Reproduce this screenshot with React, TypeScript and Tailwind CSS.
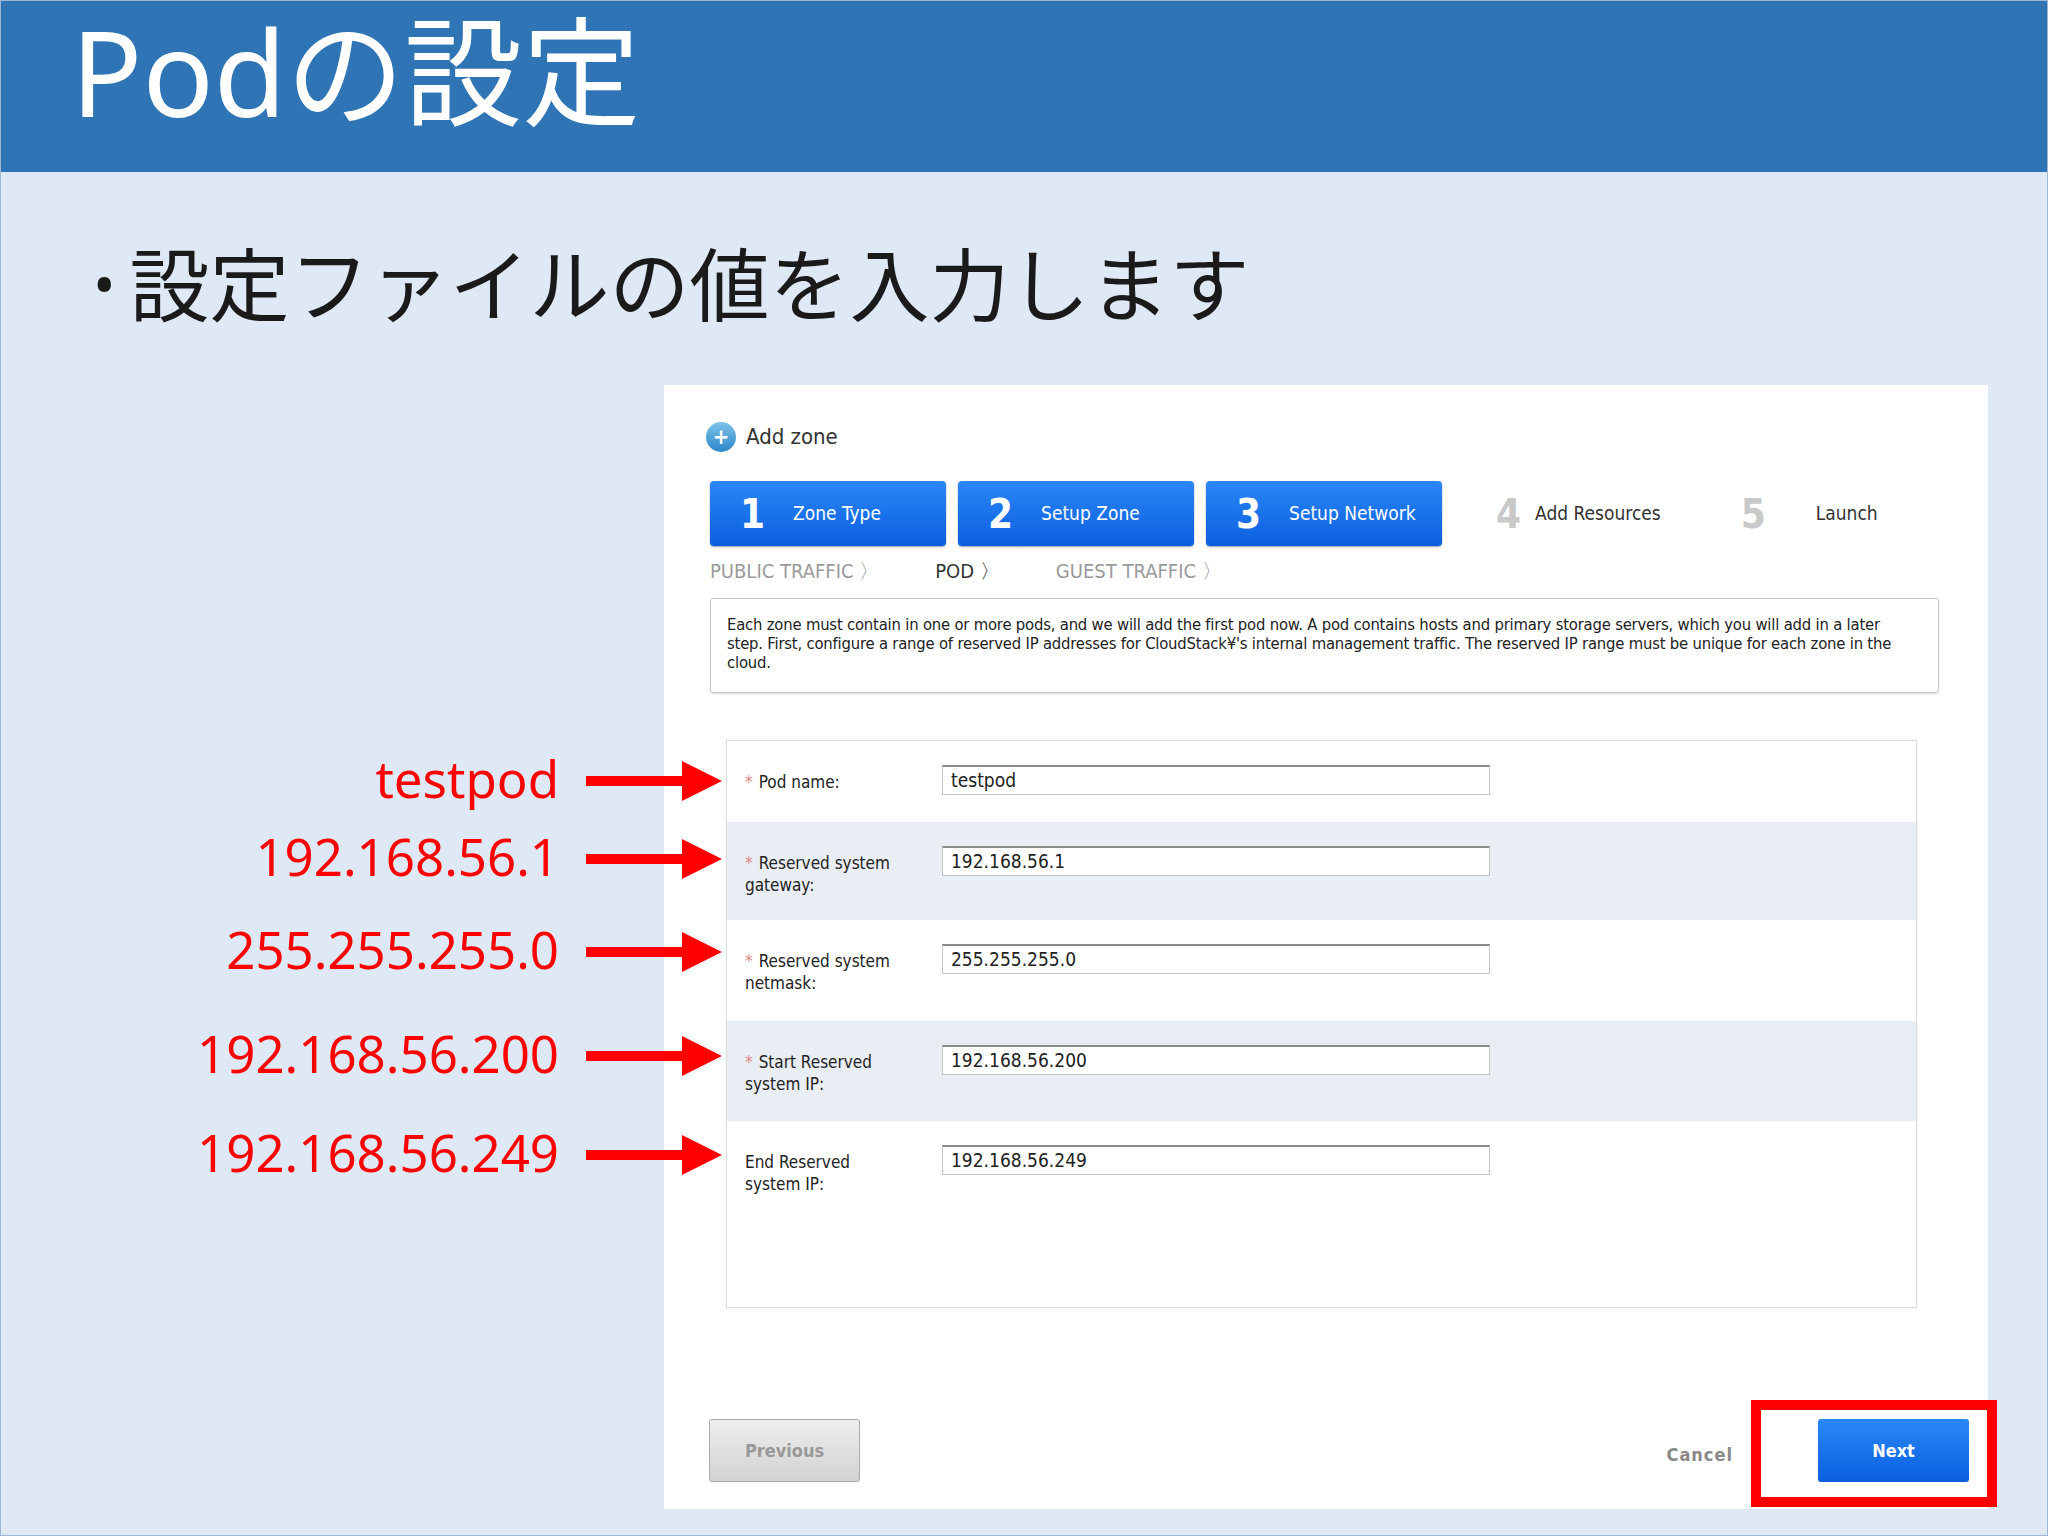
import React from "react";

const jp = { fontFamily: '"Noto Sans", "Noto Sans CJK JP", sans-serif' };
const ui = { fontFamily: '"DejaVu Sans Condensed", "Liberation Sans", sans-serif' };

function Arrow({ top }: { top: number }) {
  return (
    <svg className="absolute" style={{ left: 585, top: top - 22 }} width="140" height="44" viewBox="0 0 140 44">
      <rect x="0" y="17" width="100" height="10" fill="#ff0000" />
      <polygon points="96,2 136,22 96,42" fill="#ff0000" />
    </svg>
  );
}

const annotations = [
  { t: "testpod", y: 780 },
  { t: "192.168.56.1", y: 858 },
  { t: "255.255.255.0", y: 951 },
  { t: "192.168.56.200", y: 1055 },
  { t: "192.168.56.249", y: 1154 },
];

const rows = [
  { l1: "Pod name:", l2: "", req: true, v: "testpod", h: 81, bg: "bg-white" },
  { l1: "Reserved system", l2: "gateway:", req: true, v: "192.168.56.1", h: 98, bg: "bg-[#e9edf4]" },
  { l1: "Reserved system", l2: "netmask:", req: true, v: "255.255.255.0", h: 101, bg: "bg-white" },
  { l1: "Start Reserved", l2: "system IP:", req: true, v: "192.168.56.200", h: 100, bg: "bg-[#e9edf4]" },
  { l1: "End Reserved", l2: "system IP:", req: false, v: "192.168.56.249", h: 186, bg: "bg-white" },
];

function Step({ n, label }: { n: string; label: string }) {
  return (
    <div className="w-[236px] h-[65px] rounded-[4px] bg-gradient-to-b from-[#2b86f5] to-[#0a5fe0] flex items-center pl-[30px] gap-[28px] text-white shadow-[0_1px_2px_rgba(0,0,0,0.4)]">
      <span className="text-[40px] font-bold" style={ui}>{n}</span>
      <span className="text-[19px]" style={ui}>{label}</span>
    </div>
  );
}

export default function App() {
  return (
    <div className="relative w-[2048px] h-[1536px] bg-[#dfe9f5] border border-[#9fb7d3] overflow-hidden" style={jp}>
      <div className="h-[171px] bg-[#2f74b5] flex items-center pl-[70px]">
        <span className="text-white text-[118px] leading-none -mt-[30px]">Podの設定</span>
      </div>
      <div className="flex items-center pl-[92px] mt-[72px] text-[80px] text-[#1a1a1a] leading-none">
        <span className="mr-[14px] text-[60px]">•</span>
        <span>設定ファイルの値を入力します</span>
      </div>

      {/* panel */}
      <div className="absolute left-[663px] top-[384px] w-[1324px] h-[1124px] bg-white flex flex-col px-[46px]" style={ui}>
        <div className="flex items-center gap-[10px] mt-[35px] -ml-[4px]">
          <div className="w-[30px] h-[30px] rounded-full bg-gradient-to-b from-[#7cc3ea] to-[#2a87c8] flex items-center justify-center text-white text-[22px] font-bold leading-none">+</div>
          <span className="text-[22px] text-[#333]">Add zone</span>
        </div>
        <div className="flex items-center gap-[12px] mt-[28px]">
          <Step n="1" label="Zone Type" />
          <Step n="2" label="Setup Zone" />
          <Step n="3" label="Setup Network" />
          <div className="flex items-center ml-[42px] gap-[14px]">
            <span className="text-[40px] font-bold text-[#c9c9c9]">4</span>
            <span className="text-[19px] text-[#333]">Add Resources</span>
          </div>
          <div className="flex items-center ml-[68px] gap-[50px]">
            <span className="text-[40px] font-bold text-[#c9c9c9]">5</span>
            <span className="text-[19px] text-[#333]">Launch</span>
          </div>
        </div>
        <div className="flex items-center mt-[10px] text-[20px] gap-[56px]">
          <span className="text-[#9a9a9a]">PUBLIC TRAFFIC 〉</span>
          <span className="text-[#333]">POD 〉</span>
          <span className="text-[#9a9a9a]">GUEST TRAFFIC 〉</span>
        </div>
        <div className="mt-[12px] w-[1229px] h-[95px] border border-[#c8c8c8] rounded-[3px] shadow-[0_1px_2px_rgba(0,0,0,0.15)] pl-[16px] pr-[24px] pt-[16px] text-[16.5px] leading-[19px] text-[#222] tracking-[-0.2px]">
          Each zone must contain in one or more pods, and we will add the first pod now. A pod contains hosts and primary storage servers, which you will add in a later step. First, configure a range of reserved IP addresses for CloudStack¥'s internal management traffic. The reserved IP range must be unique for each zone in the cloud.
        </div>
        <div className="mt-[47px] ml-[16px] w-[1191px] border border-[#dedede] flex flex-col shadow-[0_0_2px_rgba(0,0,0,0.1)]">
          {rows.map((r, i) => (
            <div key={i} className={`${r.bg} flex items-start`} style={{ height: r.h }}>
              <div className="w-[215px] pl-[18px] text-[17px] leading-[22px] text-[#222] pt-[30px]">
                {r.req && <span className="text-[#d88] mr-[6px]">*</span>}
                {r.l1}
                {r.l2 && <div>{r.l2}</div>}
              </div>
              <div className="mt-[24px] w-[548px] h-[30px] bg-white border border-[#c4c4c4] border-t-[#8a8a8a] border-t-2 pl-[8px] text-[19px] leading-[26px] text-[#222]">
                {r.v}
              </div>
            </div>
          ))}
        </div>
        <div className="flex items-center mt-[111px] -ml-[1px] -mr-[27px]">
          <div className="w-[151px] h-[63px] rounded-[3px] bg-gradient-to-b from-[#eeeeee] to-[#d2d2d2] border border-[#aaa] flex items-center justify-center text-[18px] font-bold text-[#999]">Previous</div>
          <span className="ml-auto text-[18px] font-bold text-[#888] mr-[85px] mt-[8px] tracking-[1px]">Cancel</span>
          <div className="w-[151px] h-[63px] rounded-[3px] bg-gradient-to-b from-[#2a87f5] to-[#0a5fdf] flex items-center justify-center text-[18px] font-bold text-white">Next</div>
        </div>
      </div>

      {/* red highlight around Next */}
      <div className="absolute left-[1750px] top-[1399px] w-[246px] h-[107px] border-[10px] border-[#ff0000]" />

      {annotations.map((a, i) => (
        <React.Fragment key={i}>
          <div className="absolute right-[1488px] text-[51px] leading-none text-[#ff0000]" style={{ top: a.y - 28 }}>{a.t}</div>
          <Arrow top={a.y} />
        </React.Fragment>
      ))}
    </div>
  );
}
